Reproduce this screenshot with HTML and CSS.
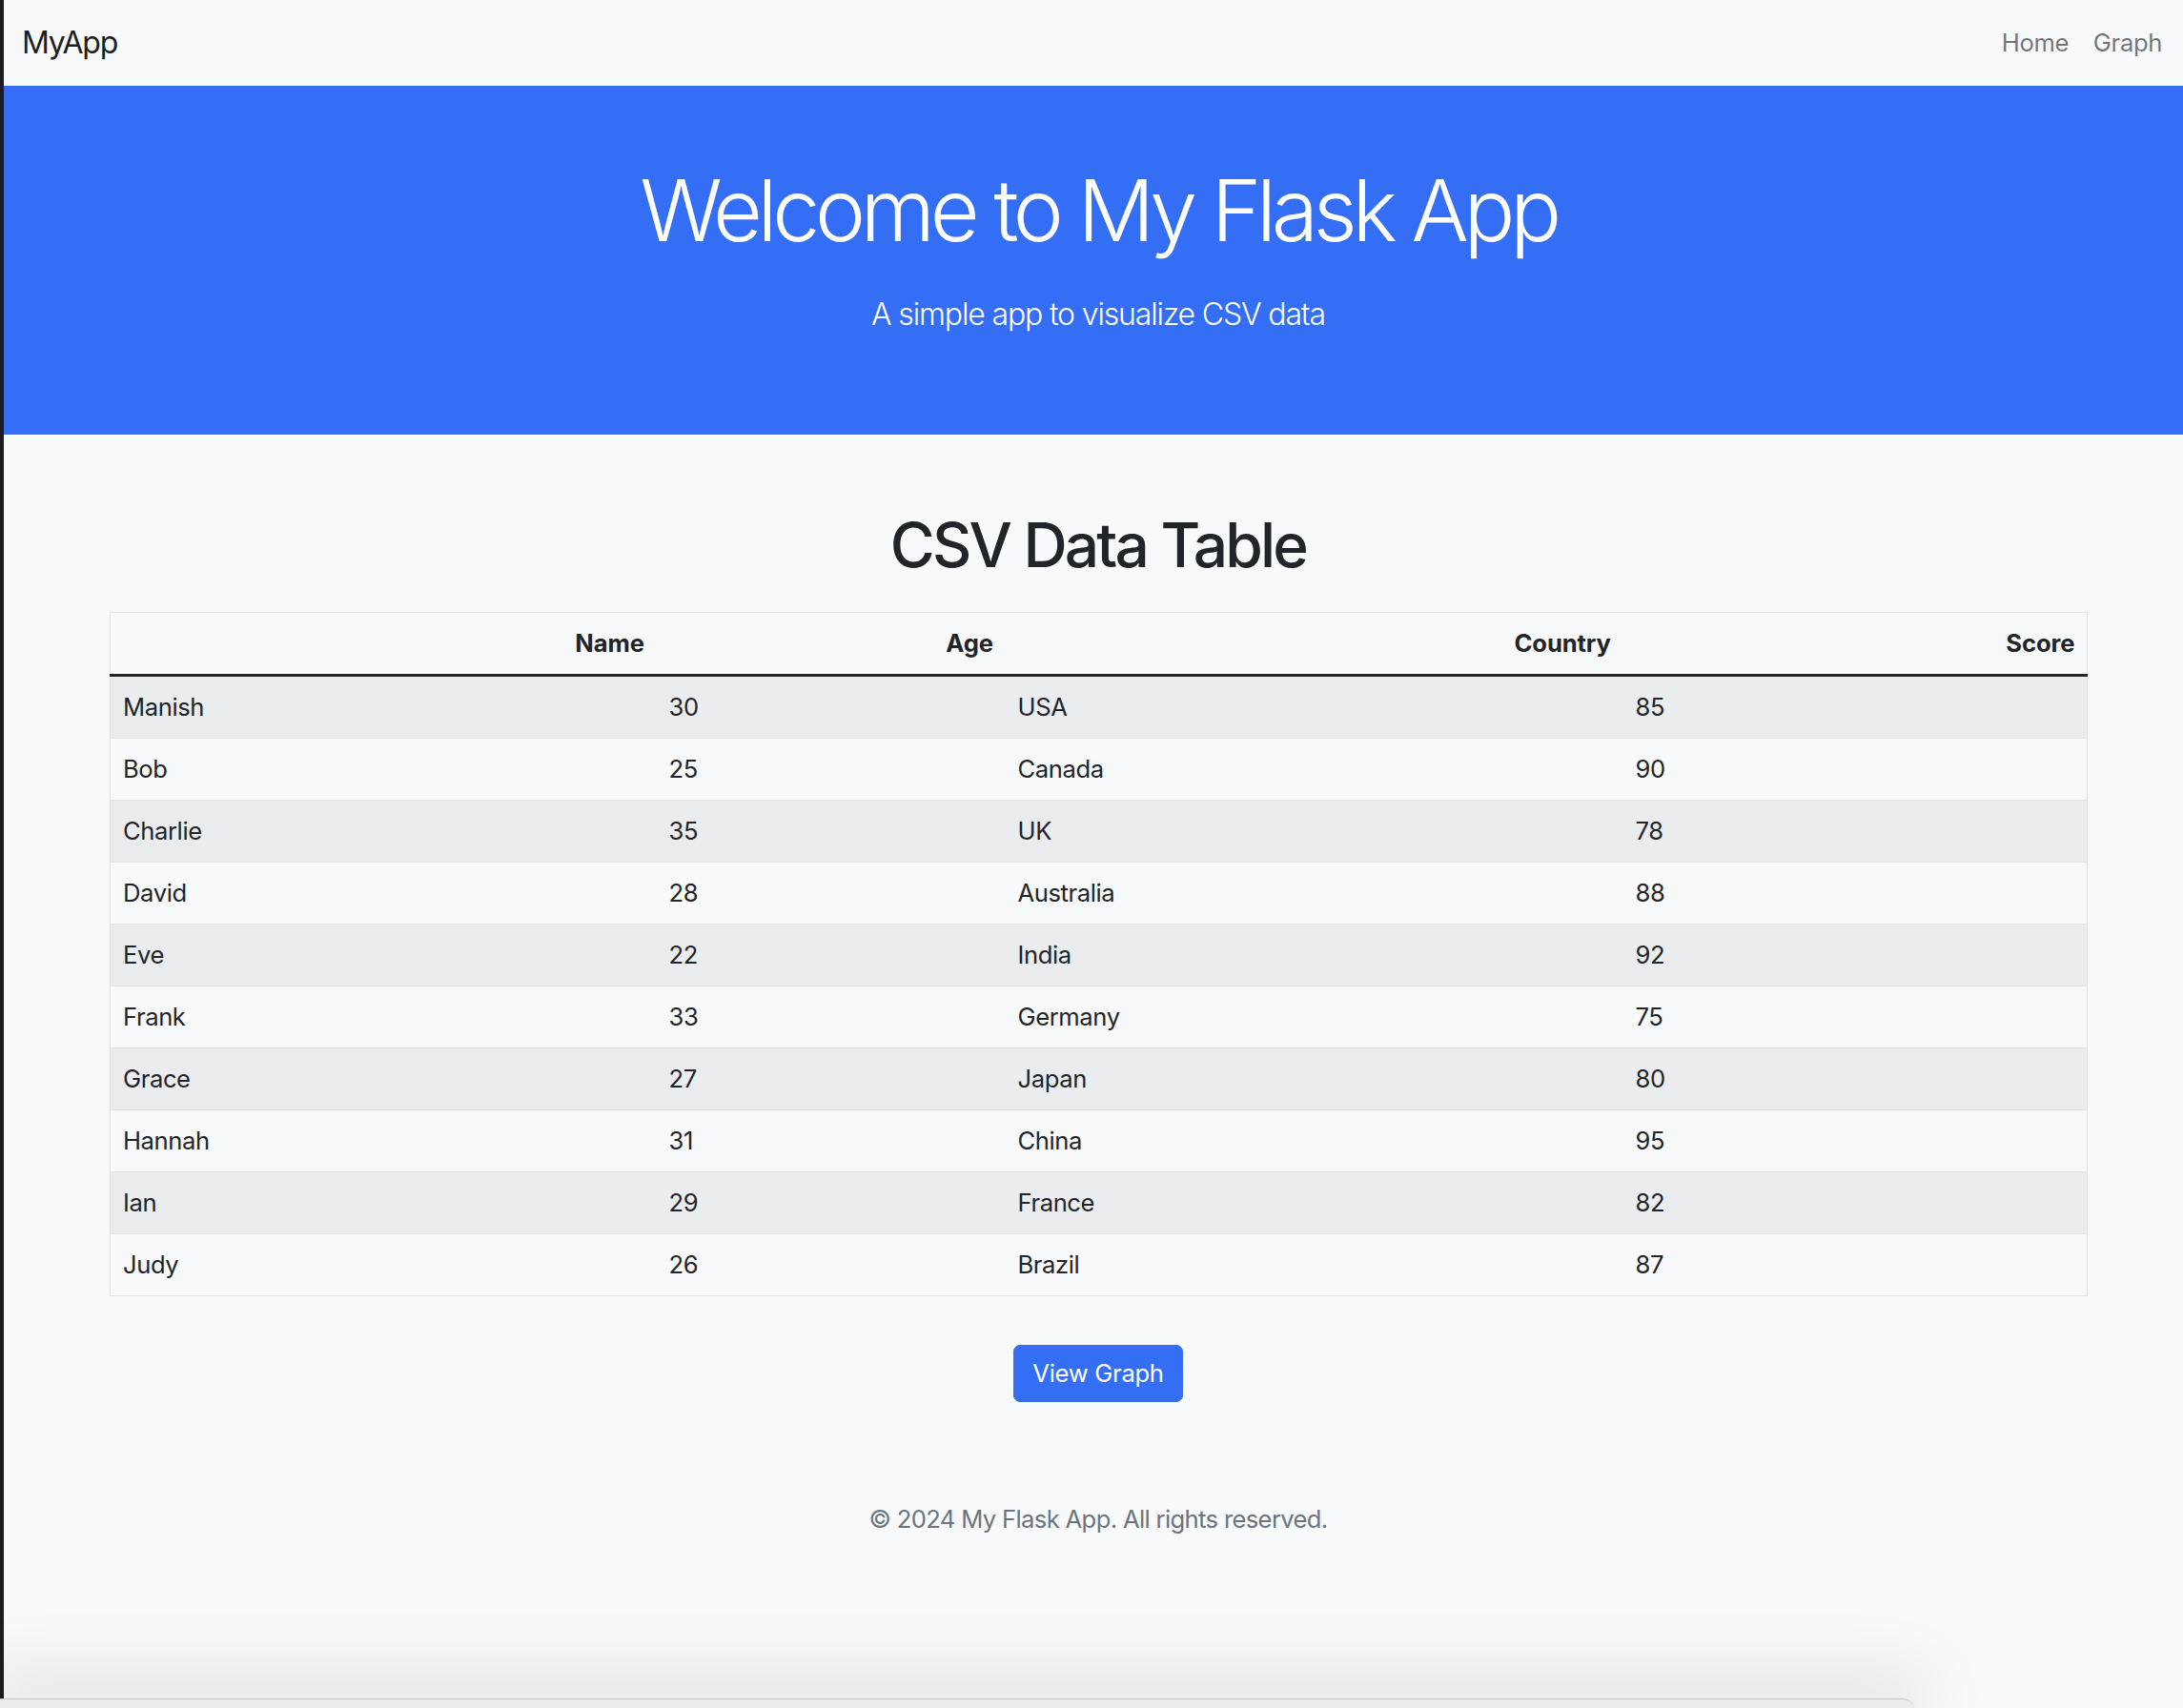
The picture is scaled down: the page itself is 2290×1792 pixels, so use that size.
FILE: index.html
```html
<!DOCTYPE html>
<html lang="en">
<head>
<meta charset="utf-8">
<title>My Flask App</title>
<link rel="stylesheet" href="styles.css">
</head>
<body>
<div class="page">
  <nav class="navbar">
    <a class="brand" href="#">MyApp</a>
    <div class="nav-links">
      <a class="nav-link" href="#">Home</a>
      <a class="nav-link" href="#">Graph</a>
    </div>
  </nav>

  <header class="hero">
    <h1 class="hero-title">Welcome to My Flask App</h1>
    <p class="hero-lead">A simple app to visualize CSV data</p>
  </header>

  <main class="container">
    <h1 class="section-title">CSV Data Table</h1>
    <table class="data-table">
      <thead>
        <tr>
          <th class="col-name">Name</th>
          <th class="col-age">Age</th>
          <th class="col-country">Country</th>
          <th class="col-score">Score</th>
        </tr>
      </thead>
      <tbody>
        <tr><td>Manish</td><td>30</td><td>USA</td><td>85</td></tr>
        <tr><td>Bob</td><td>25</td><td>Canada</td><td>90</td></tr>
        <tr><td>Charlie</td><td>35</td><td>UK</td><td>78</td></tr>
        <tr><td>David</td><td>28</td><td>Australia</td><td>88</td></tr>
        <tr><td>Eve</td><td>22</td><td>India</td><td>92</td></tr>
        <tr><td>Frank</td><td>33</td><td>Germany</td><td>75</td></tr>
        <tr><td>Grace</td><td>27</td><td>Japan</td><td>80</td></tr>
        <tr><td>Hannah</td><td>31</td><td>China</td><td>95</td></tr>
        <tr><td>Ian</td><td>29</td><td>France</td><td>82</td></tr>
        <tr><td>Judy</td><td>26</td><td>Brazil</td><td>87</td></tr>
      </tbody>
    </table>
    <div class="actions">
      <a class="btn" href="#">View Graph</a>
    </div>
  </main>

  <footer class="footer">© 2024 My Flask App. All rights reserved.</footer>
</div>
<div class="dock-edge"></div>
</body>
</html>
```

FILE: styles.css
```css
* { box-sizing: border-box; }

html, body {
  margin: 0;
  padding: 0;
}

body {
  background: #1d1d1f;
  overflow: hidden;
  height: 1792px;
  font-family: Inter, "Liberation Sans", sans-serif;
  color: #212529;
  font-size: 25.6px;
  line-height: 38.4px;
  letter-spacing: -0.4px;
}

.page {
  margin-left: 4px;
  width: 2296px;
  min-height: 1792px;
  background: #f8f9fa;
}

a { text-decoration: none; }

/* Navbar */
.navbar {
  height: 90px;
  display: flex;
  align-items: center;
  justify-content: space-between;
  padding: 0 19px 0 19px;
}

.brand {
  font-size: 32px;
  line-height: 48px;
  color: rgba(0, 0, 0, 0.9);
  margin-top: -1px;
  letter-spacing: -1.2px;
}

.nav-links {
  display: flex;
}

.nav-link {
  color: rgba(0, 0, 0, 0.55);
  padding: 0 12.8px;
  font-size: 25.6px;
  line-height: 38.4px;
  letter-spacing: -0.3px;
}

/* Hero */
.hero {
  background: #336ef5;
  color: #fff;
  text-align: center;
  height: 366px;
  padding-top: 77px;
}

.hero-title {
  margin: 0 0 31px;
  font-size: 89.6px;
  line-height: 107.5px;
  font-weight: 300;
  letter-spacing: -5.3px;
}

.hero-lead {
  margin: 0;
  font-size: 32px;
  line-height: 48px;
  font-weight: 300;
  letter-spacing: -1.15px;
}

/* Main container */
.container {
  width: 2112px;
  margin: 0 auto;
  padding: 0 19.2px;
}

.section-title {
  margin: 78px 0 31px;
  text-align: center;
  font-size: 64px;
  line-height: 76.8px;
  font-weight: 500;
  letter-spacing: -2.8px;
}

.data-table {
  width: 2074px;
  border-collapse: collapse;
  table-layout: fixed;
  border: 1px solid #e2e4e7;
}

.col-name { width: 573px; }
.col-age { width: 366px; }
.col-country { width: 648px; }
.col-score { width: 487px; }

.data-table th {
  text-align: right;
  font-weight: 700;
  padding: 12.8px;
  height: 64px;
  border-bottom: 3px solid #212529;
  letter-spacing: -0.1px;
}

.data-table td {
  text-align: left;
  padding: 12.8px;
  height: 65px;
  border-bottom: 1px solid #e2e4e7;
}

.data-table tbody tr:nth-child(odd) td {
  background: #ebecee;
}

.actions {
  text-align: center;
  margin-top: 51px;
}

.btn {
  display: inline-block;
  background: #336ef5;
  color: #fff;
  border: 1px solid #336ef5;
  border-radius: 7px;
  padding: 10px 19.2px;
  font-size: 25.6px;
  line-height: 38.4px;
  letter-spacing: -0.3px;
}

/* Footer */
.footer {
  margin-top: 104px;
  text-align: center;
  color: #6c757d;
  letter-spacing: -0.65px;
}

/* Overlapping window edge at the bottom of the screenshot */
.dock-edge {
  position: fixed;
  left: 0;
  bottom: -2px;
  width: 2008px;
  height: 12px;
  background: #ececee;
  border-top: 1px solid #c4c5c8;
  border-top-right-radius: 14px;
  box-shadow: 0 -10px 70px 20px rgba(0, 0, 0, 0.09);
}
```
